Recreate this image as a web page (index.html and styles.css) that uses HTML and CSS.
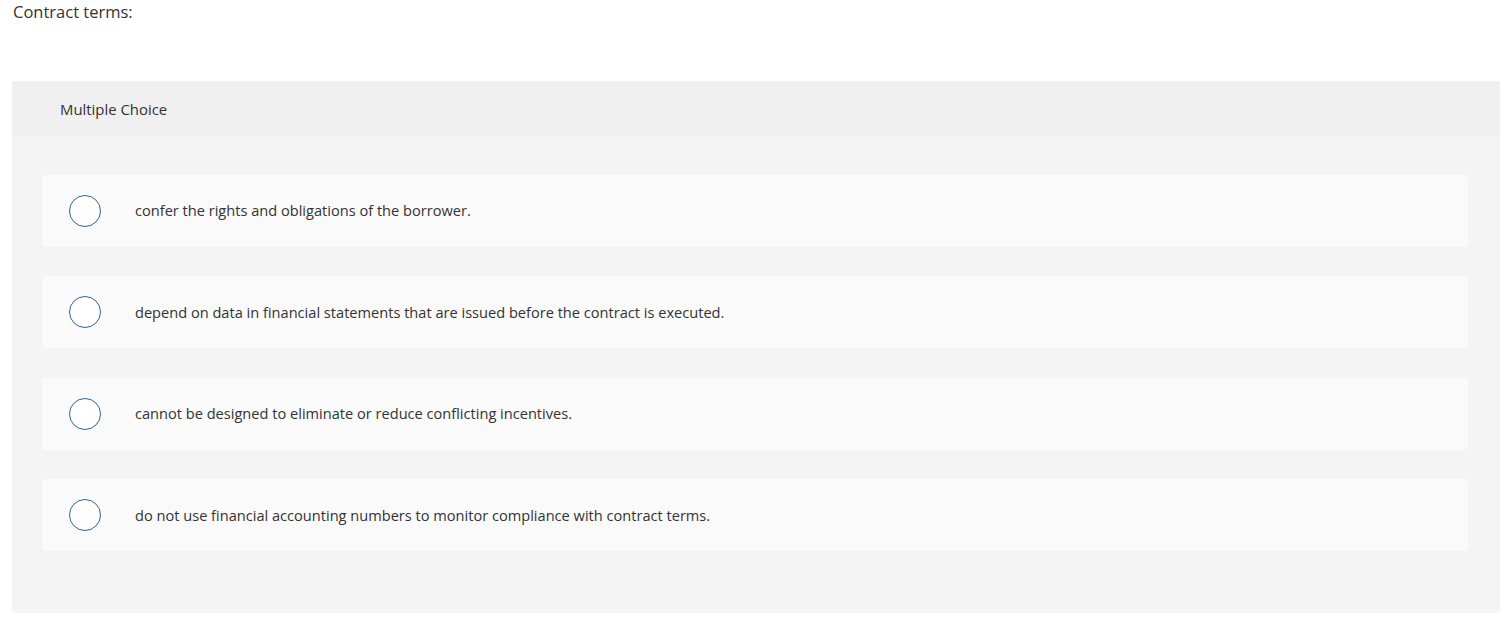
FILE: index.html
```html
<!DOCTYPE html>
<html>
<head>
<meta charset="utf-8">
<link rel="stylesheet" href="styles.css">
</head>
<body>
<div class="page">
  <p class="prompt">Contract terms:</p>
  <div class="panel">
    <div class="panel-head">Multiple Choice</div>
    <div class="panel-body">
      <label class="option"><span class="radio"></span><span class="opt-text">confer the rights and obligations of the borrower.</span></label>
      <label class="option"><span class="radio"></span><span class="opt-text">depend on data in financial statements that are issued before the contract is executed.</span></label>
      <label class="option"><span class="radio"></span><span class="opt-text">cannot be designed to eliminate or reduce conflicting incentives.</span></label>
      <label class="option"><span class="radio"></span><span class="opt-text">do not use financial accounting numbers to monitor compliance with contract terms.</span></label>
    </div>
  </div>
</div>
</body>
</html>
```

FILE: styles.css
```css
* { box-sizing: border-box; }
html, body { margin: 0; padding: 0; background: #fff; }
body { font-family: "Open Sans", Lato, Arial, sans-serif; color: #333; }
.page { padding: 0 10px 0 12px; }
.prompt {
  margin: 0;
  padding: 1px 0 0 1px;
  font-size: 16.5px;
  line-height: 22px;
  color: #333;
}
.panel {
  margin-top: 58px;
  width: 1488px;
  border-radius: 3px;
  overflow: hidden;
  background: #f4f4f4;
}
.panel-head {
  height: 56px;
  background: #f0f0f0;
  padding-left: 48px;
  display: flex;
  align-items: center;
  font-size: 14.9px;
  color: #333;
}
.panel-body {
  padding: 37.5px 32px 61.5px 30px;
  display: flex;
  flex-direction: column;
  gap: 29.5px;
}
.option {
  height: 72px;
  background: #fafafa;
  border-radius: 4px;
  display: flex;
  align-items: center;
  padding-left: 27px;
}
.radio {
  width: 32px;
  height: 32px;
  border: 1.5px solid #2f6394;
  border-radius: 50%;
  background: #fff;
  flex: none;
}
.opt-text {
  margin-left: 34px;
  padding-bottom: 1px;
  font-size: 14.6px;
  color: #333;
}
```
